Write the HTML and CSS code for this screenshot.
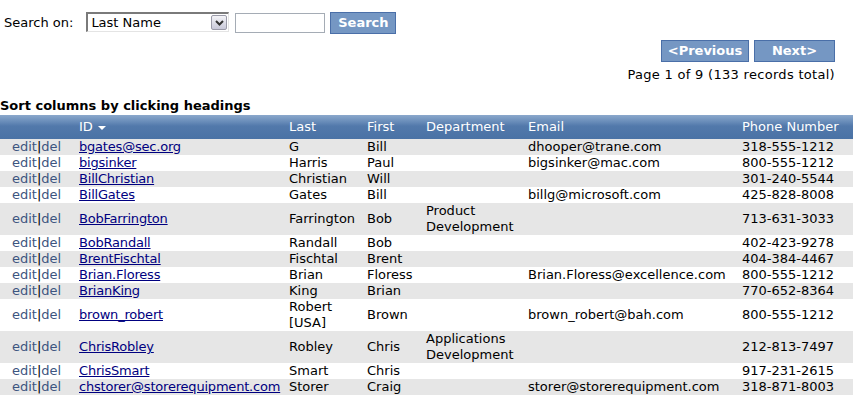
FILE: index.html
```html
<!DOCTYPE html>
<html>
<head>
<meta charset="utf-8">
<link rel="stylesheet" href="styles.css">
</head>
<body>
<div class="search">
  <span class="label">Search on:</span>
  <div class="select"><span>Last Name</span><span class="arrow"><svg width="13" height="13" viewBox="0 0 13 13"><path d="M3 5 L6.5 8.5 L10 5" fill="none" stroke="#333" stroke-width="2"/></svg></span></div>
  <input class="text" type="text">
  <button class="btn btn-search">Search</button>
</div>
<div class="pager">
  <div class="pbtns"><button class="btn btn-prev">&lt;Previous</button><button class="btn btn-next">Next&gt;</button></div>
  <div class="pinfo">Page 1 of 9 (133 records total)</div>
</div>
<div class="sorthead">Sort columns by clicking headings</div>
<table class="grid">
  <colgroup>
    <col class="c1"><col class="c2"><col class="c3"><col class="c4"><col class="c5"><col class="c6"><col class="c7">
  </colgroup>
  <thead>
    <tr><th></th><th>ID <span class="tri"></span></th><th>Last</th><th>First</th><th>Department</th><th>Email</th><th>Phone Number</th></tr>
  </thead>
  <tbody>
    <tr class="g"><td class="ed">edit<b>|</b>del</td><td><a href="#">bgates@sec.org</a></td><td>G</td><td>Bill</td><td></td><td>dhooper@trane.com</td><td>318-555-1212</td></tr>
    <tr><td class="ed">edit<b>|</b>del</td><td><a href="#">bigsinker</a></td><td>Harris</td><td>Paul</td><td></td><td>bigsinker@mac.com</td><td>800-555-1212</td></tr>
    <tr class="g"><td class="ed">edit<b>|</b>del</td><td><a href="#">BillChristian</a></td><td>Christian</td><td>Will</td><td></td><td></td><td>301-240-5544</td></tr>
    <tr><td class="ed">edit<b>|</b>del</td><td><a href="#">BillGates</a></td><td>Gates</td><td>Bill</td><td></td><td>billg@microsoft.com</td><td>425-828-8008</td></tr>
    <tr class="g"><td class="ed">edit<b>|</b>del</td><td><a href="#">BobFarrington</a></td><td>Farrington</td><td>Bob</td><td>Product Development</td><td></td><td>713-631-3033</td></tr>
    <tr><td class="ed">edit<b>|</b>del</td><td><a href="#">BobRandall</a></td><td>Randall</td><td>Bob</td><td></td><td></td><td>402-423-9278</td></tr>
    <tr class="g"><td class="ed">edit<b>|</b>del</td><td><a href="#">BrentFischtal</a></td><td>Fischtal</td><td>Brent</td><td></td><td></td><td>404-384-4467</td></tr>
    <tr><td class="ed">edit<b>|</b>del</td><td><a href="#">Brian.Floress</a></td><td>Brian</td><td>Floress</td><td></td><td>Brian.Floress@excellence.com</td><td>800-555-1212</td></tr>
    <tr class="g"><td class="ed">edit<b>|</b>del</td><td><a href="#">BrianKing</a></td><td>King</td><td>Brian</td><td></td><td></td><td>770-652-8364</td></tr>
    <tr><td class="ed">edit<b>|</b>del</td><td><a href="#">brown_robert</a></td><td>Robert [USA]</td><td>Brown</td><td></td><td>brown_robert@bah.com</td><td>800-555-1212</td></tr>
    <tr class="g"><td class="ed">edit<b>|</b>del</td><td><a href="#">ChrisRobley</a></td><td>Robley</td><td>Chris</td><td>Applications Development</td><td></td><td>212-813-7497</td></tr>
    <tr><td class="ed">edit<b>|</b>del</td><td><a href="#">ChrisSmart</a></td><td>Smart</td><td>Chris</td><td></td><td></td><td>917-231-2615</td></tr>
    <tr class="g"><td class="ed">edit<b>|</b>del</td><td><a href="#">chstorer@storerequipment.com</a></td><td>Storer</td><td>Craig</td><td></td><td>storer@storerequipment.com</td><td>318-871-8003</td></tr>
  </tbody>
</table>
</body>
</html>
```
FILE: styles.css
```css
html, body {
  margin: 0;
  padding: 0;
  background: #fff;
  color: #000;
  font-family: "DejaVu Sans", Verdana, sans-serif;
  font-size: 13px;
  line-height: 16px;
}
.search {
  display: flex;
  align-items: center;
  padding: 12px 0 0 4px;
  height: 21px;
}
.label {
  margin-right: 13px;
}
.select {
  box-sizing: border-box;
  width: 143px;
  height: 20px;
  border-top: 2px solid #7a7a7a;
  border-left: 2px solid #7a7a7a;
  border-right: 1px solid #e4e4e4;
  border-bottom: 1px solid #e4e4e4;
  background: #fff;
  display: flex;
  align-items: center;
  justify-content: space-between;
  padding-left: 3px;
  margin-top: -1px;
}
.arrow {
  box-sizing: border-box;
  width: 16px;
  height: 15px;
  margin-right: 1px;
  border: 1px solid #9a9aa8;
  border-radius: 2px;
  background: linear-gradient(#f4f4f8, #c8c8d8);
  display: flex;
  align-items: center;
  justify-content: center;
}
.text {
  box-sizing: border-box;
  width: 90px;
  height: 20px;
  margin: 0 0 0 6px;
  border: 1px solid #a5acb5;
  padding: 0;
}
.btn {
  box-sizing: border-box;
  font-family: "DejaVu Sans", Verdana, sans-serif;
  font-weight: bold;
  font-size: 13px;
  color: #fff;
  background: #7597c3;
  border: 1px solid #4a6fa8;
  padding: 0;
  line-height: 16px;
}
.btn-search {
  width: 66px;
  height: 22px;
  margin-left: 5px;
}
.pager {
  display: flex;
  flex-direction: column;
  align-items: flex-end;
  padding-right: 18px;
  margin-top: 7px;
}
.pbtns {
  display: flex;
  gap: 5px;
}
.btn-prev {
  width: 88px;
  height: 22px;
}
.btn-next {
  width: 81px;
  height: 22px;
}
.pinfo {
  margin-top: 5px;
  letter-spacing: 0.3px;
}
.sorthead {
  font-weight: bold;
  margin-top: 15px;
  margin-bottom: 1px;
  height: 16px;
}
.grid {
  width: 853px;
  table-layout: fixed;
  border-collapse: collapse;
  border-spacing: 0;
}
.c1 { width: 79px; }
.c2 { width: 210px; }
.c3 { width: 78px; }
.c4 { width: 59px; }
.c5 { width: 102px; }
.c6 { width: 214px; }
.c7 { width: 111px; }
.grid th {
  height: 24px;
  padding: 0;
  text-align: left;
  font-weight: normal;
  color: #fff;
  background: linear-gradient(#8ba8cc 0px, #6c8fbb 6px, #5279ab 11px, #4a72a5 24px);
  vertical-align: middle;
  white-space: nowrap;
}
.tri {
  display: inline-block;
  width: 0;
  height: 0;
  border-left: 4px solid transparent;
  border-right: 4px solid transparent;
  border-top: 4px solid #fff;
  vertical-align: middle;
  margin-left: 1px;
}
.grid td {
  padding: 0;
  vertical-align: middle;
  line-height: 16px;
}
.grid tr.g td {
  background: #e6e6e6;
}
.grid td.ed {
  padding-left: 12px;
  color: #3d5580;
  white-space: nowrap;
}
.grid td.ed b {
  color: #000;
  font-weight: normal;
}
.grid a {
  color: #000080;
  text-decoration: underline;
  letter-spacing: -0.2px;
}
```
